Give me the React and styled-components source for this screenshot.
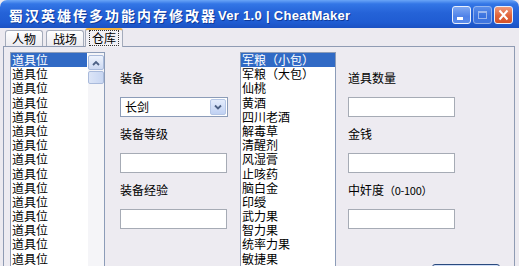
import React from 'react';
import styled, {createGlobalStyle, css} from 'styled-components';

const GlobalStyle = createGlobalStyle`
  html, body {
    margin: 0;
    padding: 0;
    background: #ECEAF0;
  }
  body {
    font-family: "Noto Sans CJK SC", "Liberation Sans", sans-serif;
    font-size: 12px;
    color: #000;
  }
`;

const Window = styled.div`
  width: 519px;
  height: 266px;
  display: flex;
  flex-direction: column;
  overflow: hidden;
  background: #ECEAF0;
  border-radius: 7px 7px 0 0;
`;

const TitleBar = styled.div`
  height: 28px;
  flex: none;
  display: flex;
  align-items: center;
  box-sizing: border-box;
  padding: 2px 6px 0 9px;
  background: linear-gradient(to bottom, #6AA5F7 0%, #3376E6 14%, #2563D8 45%, #1F5CD2 80%, #1B51C2 100%);
  color: #fff;
  text-shadow: 1px 1px 0 #0F3A9A;
  white-space: nowrap;
`;

const TitleCjk = styled.span`
  font-family: "Noto Sans CJK SC", sans-serif;
  font-weight: 700;
  font-size: 14px;
  letter-spacing: 2px;
`;

const TitleLatin = styled.span`
  font-family: "Liberation Sans", "DejaVu Sans", sans-serif;
  font-weight: 700;
  font-size: 13px;
  margin-left: 1px;
  letter-spacing: 0.3px;
`;

const Controls = styled.div`
  display: flex;
  gap: 2px;
  margin-left: auto;
`;

const CtrlButton = styled.div`
  width: 19px;
  height: 18px;
  box-sizing: border-box;
  border: 1px solid #EAF0FC;
  border-radius: 3px;
  display: flex;
  align-items: center;
  justify-content: center;
  background: linear-gradient(to bottom, #7FA8F2, #4F82E8 60%, #5B8CEB);
  ${p => p.faded && css`
    opacity: 0.55;
  `}
  ${p => p.close && css`
    background: linear-gradient(to bottom, #F09A7C, #E0633A 55%, #D45228);
  `}
`;

const Body = styled.div`
  flex: 1;
  min-height: 0;
  display: flex;
  flex-direction: column;
  padding: 0 4px 0 3px;
`;

const TabStrip = styled.div`
  height: 18px;
  flex: none;
  display: flex;
  align-items: flex-end;
  gap: 3px;
  padding-left: 2px;
`;

const Tab = styled.div`
  height: 16px;
  box-sizing: border-box;
  padding: 0 6px;
  border: 1px solid #A4ABBA;
  border-bottom: none;
  border-radius: 3px 3px 0 0;
  background: linear-gradient(to bottom, #FFFFFF, #ECEBF0);
  line-height: 15px;
  position: relative;
  ${p => p.active && css`
    height: 19px;
    padding: 0 4px;
    margin: 0 -2px -1px -2px;
    background: #F1F0F5;
    border-top: 2px solid #F3B443;
    z-index: 1;
  `}
`;

const FocusRect = styled.span`
  display: inline-block;
  padding: 0 2px;
  line-height: 14px;
  outline: 1px dotted #333;
`;

const Panel = styled.div`
  flex: 1;
  min-height: 0;
  display: flex;
  align-items: flex-start;
  box-sizing: border-box;
  padding: 5px 0 0 6px;
  border: 1px solid #8F9BB3;
  border-bottom: none;
  background: #EDEBF1;
`;

const ListBox = styled.div`
  width: ${p => p.width}px;
  height: 232px;
  flex: none;
  margin-left: ${p => p.offset || 0}px;
  box-sizing: border-box;
  border: 1px solid #8C9CB8;
  background: #fff;
  display: flex;
  overflow: hidden;
`;

const Items = styled.div`
  flex: 1;
  min-width: 0;
`;

const Item = styled.div`
  height: 14.2px;
  line-height: 14px;
  padding-left: 1px;
  white-space: nowrap;
  ${p => p.selected && css`
    background: #316AC5;
    color: #fff;
  `}
`;

const ScrollBar = styled.div`
  width: 16px;
  flex: none;
  background: #F5F5F8;
  display: flex;
  flex-direction: column;
  padding-top: 2px;
  margin-left: 1px;
`;

const ScrollButton = styled.div`
  height: 15px;
  box-sizing: border-box;
  border: 1px solid #A9BADB;
  border-radius: 2px;
  background: linear-gradient(to bottom, #EEF3FD, #CDD9F2);
  display: flex;
  align-items: center;
  justify-content: center;
`;

const Thumb = styled.div`
  height: 13px;
  margin-top: 1px;
  box-sizing: border-box;
  border: 1px solid #A9BADB;
  border-radius: 2px;
  background: linear-gradient(to right, #DCE5F7, #C8D6F2);
`;

const Column = styled.div`
  width: ${p => p.width}px;
  flex: none;
  margin-left: ${p => p.offset}px;
  padding-top: 19px;
  display: flex;
  flex-direction: column;
  gap: 10px;
`;

const Field = styled.div`
  display: flex;
  flex-direction: column;
  gap: 12px;
`;

const Label = styled.div`
  height: 14px;
  line-height: 14px;
  white-space: nowrap;
`;

const Paren = styled.span`
  font-size: 11px;
  letter-spacing: -0.3px;
`;

const Input = styled.div`
  width: 107px;
  height: 20px;
  box-sizing: border-box;
  border: 1px solid #A6ABB5;
  background: #fff;
`;

const Combo = styled.div`
  width: 108px;
  height: 20px;
  box-sizing: border-box;
  border: 1px solid #8C9CB8;
  background: #fff;
  display: flex;
  align-items: center;
  padding: 1px;
`;

const ComboValue = styled.div`
  flex: 1;
  padding-left: 3px;
  line-height: 16px;
`;

const DropButton = styled.div`
  width: 16px;
  height: 16px;
  box-sizing: border-box;
  border: 1px solid #B5C6E6;
  border-radius: 2px;
  background: linear-gradient(to bottom, #E4ECFC, #C0D1F3);
  display: flex;
  align-items: center;
  justify-content: center;
`;

const ActionButton = styled.div`
  align-self: flex-end;
  margin-top: 25px;
  width: 68px;
  height: 23px;
  box-sizing: border-box;
  border: 1px solid #2A4A7E;
  border-radius: 3px;
  background: linear-gradient(to bottom, #FFFFFF, #ECEBE6);
  box-shadow: inset 0 1px 0 #CFDDF6, inset 0 -1px 0 #8DB2E3;
  display: flex;
  justify-content: center;
  line-height: 21px;
`;

const Chevron = ({up}) => (
    <svg width="8" height="6" viewBox="0 0 8 6">
        <path d={up ? "M1 5 L4 2 L7 5" : "M1 1.5 L4 4.5 L7 1.5"} fill="none" stroke="#4D6185" strokeWidth="1.8"/>
    </svg>
);

const slots = Array.from({length: 16}, () => '道具位');

const goods = [
    '军粮（小包）', '军粮（大包）', '仙桃', '黄酒', '四川老酒', '解毒草', '清醒剂',
    '风湿膏', '止咳药', '脑白金', '印绶', '武力果', '智力果', '统率力果', '敏捷果'
];

export default function App() {
    return (
        <>
            <GlobalStyle/>
            <Window>
                <TitleBar>
                    <TitleCjk>蜀汉英雄传多功能内存修改器</TitleCjk>
                    <TitleLatin>Ver 1.0 | CheatMaker</TitleLatin>
                    <Controls>
                        <CtrlButton>
                            <svg width="13" height="12" viewBox="0 0 13 12">
                                <rect x="2" y="8" width="6" height="3" fill="#fff"/>
                            </svg>
                        </CtrlButton>
                        <CtrlButton faded>
                            <svg width="13" height="12" viewBox="0 0 13 12">
                                <rect x="2.5" y="2.5" width="8" height="7" fill="none" stroke="#fff"/>
                                <rect x="2" y="2" width="9" height="2" fill="#fff"/>
                            </svg>
                        </CtrlButton>
                        <CtrlButton close>
                            <svg width="13" height="12" viewBox="0 0 13 12">
                                <path d="M2.5 1.5 L10.5 10.5 M10.5 1.5 L2.5 10.5" stroke="#fff" strokeWidth="2"/>
                            </svg>
                        </CtrlButton>
                    </Controls>
                </TitleBar>
                <Body>
                    <TabStrip>
                        <Tab>人物</Tab>
                        <Tab>战场</Tab>
                        <Tab active><FocusRect>仓库</FocusRect></Tab>
                    </TabStrip>
                    <Panel>
                        <ListBox width={95}>
                            <Items>
                                {slots.map((s, i) => <Item key={i} selected={i === 0}>{s}</Item>)}
                            </Items>
                            <ScrollBar>
                                <ScrollButton><Chevron up/></ScrollButton>
                                <Thumb/>
                            </ScrollBar>
                        </ListBox>
                        <Column width={108} offset={15}>
                            <Field>
                                <Label>装备</Label>
                                <Combo>
                                    <ComboValue>长剑</ComboValue>
                                    <DropButton><Chevron/></DropButton>
                                </Combo>
                            </Field>
                            <Field>
                                <Label>装备等级</Label>
                                <Input/>
                            </Field>
                            <Field>
                                <Label>装备经验</Label>
                                <Input/>
                            </Field>
                        </Column>
                        <ListBox width={96} offset={12}>
                            <Items>
                                {goods.map((g, i) => <Item key={i} selected={i === 0}>{g}</Item>)}
                            </Items>
                        </ListBox>
                        <Column width={152} offset={12}>
                            <Field>
                                <Label>道具数量</Label>
                                <Input/>
                            </Field>
                            <Field>
                                <Label>金钱</Label>
                                <Input/>
                            </Field>
                            <Field>
                                <Label>中奸度<Paren>（0-100）</Paren></Label>
                                <Input/>
                            </Field>
                            <ActionButton>修改</ActionButton>
                        </Column>
                    </Panel>
                </Body>
            </Window>
        </>
    );
}
